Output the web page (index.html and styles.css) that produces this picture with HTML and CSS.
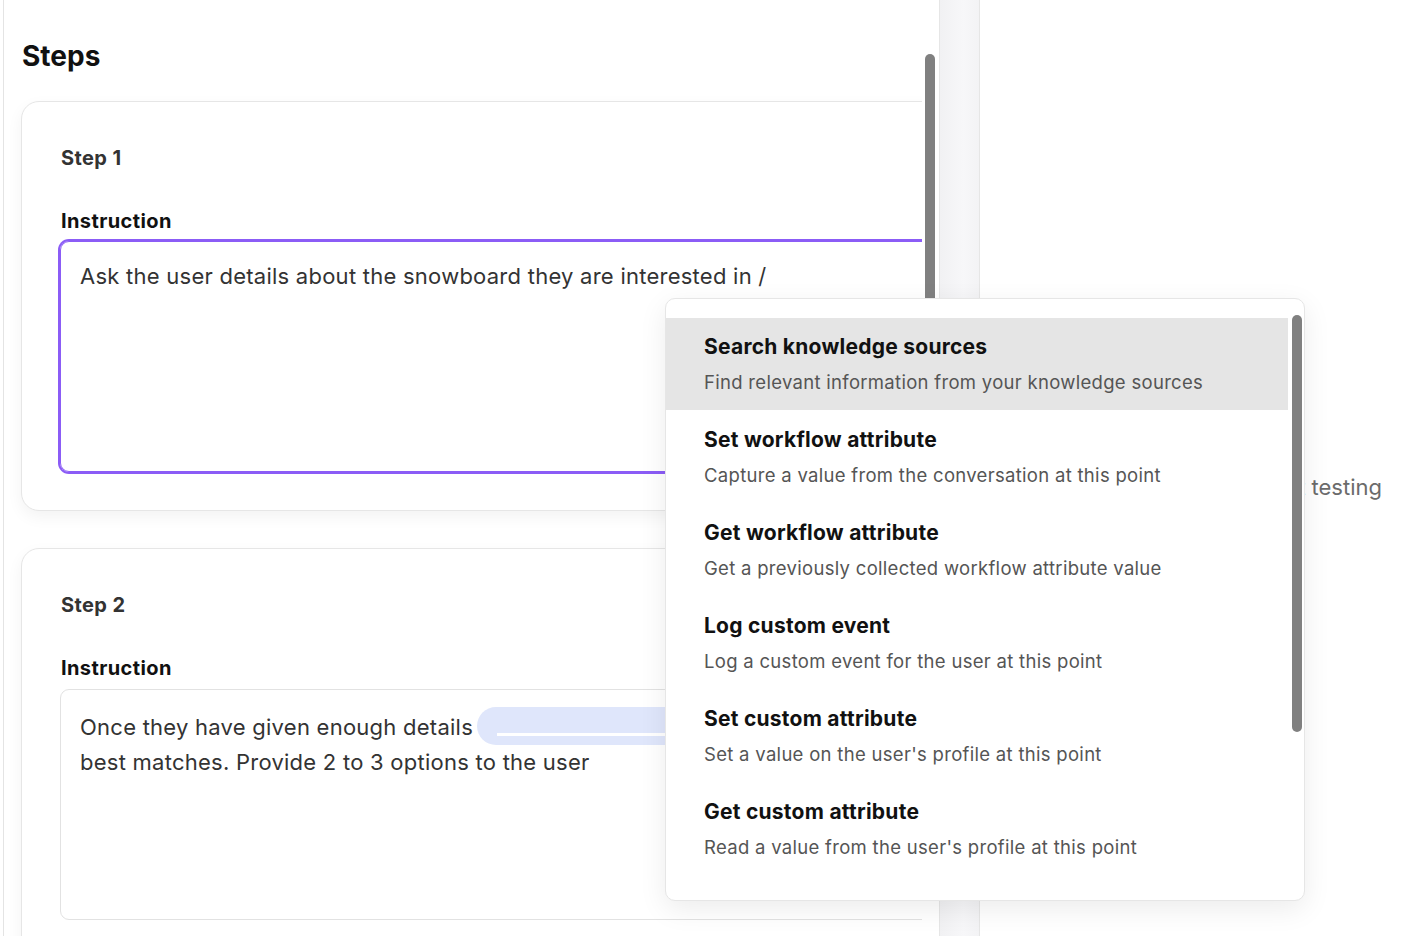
FILE: index.html
```html
<!DOCTYPE html>
<html lang="en">
<head>
    <meta charset="UTF-8">
    <meta name="viewport" content="width=device-width, initial-scale=1.0">
    <title>Workflow steps</title>
    <link rel="stylesheet" href="styles.css">
</head>
<body>
    <div class="editor">
        <div class="editor-scroll">
            <h1 class="title">Steps</h1>

            <div class="step-card">
                <div class="step-label">Step 1</div>
                <div class="field-label">Instruction</div>
                <div class="instruction active">Ask the user details about the snowboard they are interested in /</div>
            </div>

            <div class="step-card">
                <div class="step-label">Step 2</div>
                <div class="field-label">Instruction</div>
                <div class="instruction">Once they have given enough details <span class="chip"><span class="chip-line"></span></span><br>best matches. Provide 2 to 3 options to the user</div>
            </div>
        </div>
        <div class="scrollbar">
            <div class="thumb editor-thumb"></div>
        </div>
    </div>

    <div class="divider"></div>

    <div class="preview">
        <p class="preview-text">Save your workflow to start testing</p>
    </div>

    <div class="menu">
        <ul class="menu-list">
            <li class="menu-item selected">
                <div class="menu-title">Search knowledge sources</div>
                <div class="menu-desc">Find relevant information from your knowledge sources</div>
            </li>
            <li class="menu-item">
                <div class="menu-title">Set workflow attribute</div>
                <div class="menu-desc">Capture a value from the conversation at this point</div>
            </li>
            <li class="menu-item">
                <div class="menu-title">Get workflow attribute</div>
                <div class="menu-desc">Get a previously collected workflow attribute value</div>
            </li>
            <li class="menu-item">
                <div class="menu-title">Log custom event</div>
                <div class="menu-desc">Log a custom event for the user at this point</div>
            </li>
            <li class="menu-item">
                <div class="menu-title">Set custom attribute</div>
                <div class="menu-desc">Set a value on the user's profile at this point</div>
            </li>
            <li class="menu-item">
                <div class="menu-title">Get custom attribute</div>
                <div class="menu-desc">Read a value from the user's profile at this point</div>
            </li>
        </ul>
        <div class="scrollbar menu-scrollbar">
            <div class="thumb menu-thumb"></div>
        </div>
    </div>
</body>
</html>
```

FILE: styles.css
```css
body {
    font-family: Inter, "Noto Sans", sans-serif;
    margin: 0;
    padding: 0;
    background-color: #fff;
    display: flex;
    flex-direction: row;
    height: 936px;
    overflow: hidden;
    color: #1a1a1a;
}
.editor {
    margin-left: 3px;
    border-left: 1px solid #e4e4e4;
    width: 935px;
    display: flex;
    flex-direction: row;
}
.editor-scroll {
    width: 901px;
    padding-left: 17px;
    overflow: hidden;
}
.title {
    font-size: 28px;
    font-weight: 700;
    margin: 39px 0 28px 1px;
    line-height: 34px;
    color: #111;
}
.step-card {
    width: 1000px;
    border: 1px solid #e6e6e6;
    border-radius: 18px;
    padding: 42px 0 38px 38px;
    margin-bottom: 37px;
    box-shadow: 0 6px 16px rgba(0,0,0,0.05);
    background: #fff;
}
.step-label {
    font-size: 20px;
    font-weight: 700;
    letter-spacing: 0.4px;
    color: #333;
    line-height: 28px;
    padding-left: 1px;
}
.field-label {
    font-size: 20px;
    font-weight: 700;
    letter-spacing: 0.4px;
    color: #111;
    line-height: 28px;
    margin-top: 35px;
    margin-bottom: 7px;
    padding-left: 1px;
}
.instruction {
    border: 1px solid #e2e2e2;
    border-radius: 9px;
    height: 231px;
    box-sizing: border-box;
    padding: 20px 19px;
    font-size: 22px;
    letter-spacing: 0.25px;
    line-height: 35px;
    color: #333;
}
.instruction.active {
    border-color: #8b5cf6;
    box-shadow: 0 0 0 2px #8b5cf6;
    margin-top: -1px;
    padding-top: 17px;
}
.chip {
    display: inline-block;
    vertical-align: middle;
    width: 300px;
    height: 38px;
    margin-top: -6px;
    margin-left: -2px;
    border-radius: 19px;
    background-color: #dfe6fb;
    box-sizing: border-box;
    padding: 0 0 0 20px;
}
.chip-line {
    display: block;
    height: 26px;
    border-bottom: 3px solid #fff;
}
.scrollbar {
    width: 10px;
    margin-left: 3px;
    padding-top: 54px;
}
.thumb {
    background-color: #808080;
    border-radius: 5px;
}
.editor-thumb {
    height: 700px;
}
.divider {
    width: 39px;
    background: linear-gradient(to right, #f1f1f3, #f7f7f9 60%, #f3f3f5);
    border-left: 1px solid #e6e6e6;
    border-right: 1px solid #e6e6e6;
}
.preview {
    flex: 1;
    display: flex;
    justify-content: flex-end;
    padding: 470px 42px 0 0;
}
.preview-text {
    margin: 0;
    font-size: 22px;
    line-height: 34px;
    color: #6b6b6b;
    white-space: nowrap;
}
.menu {
    position: absolute;
    left: 665px;
    top: 298px;
    width: 640px;
    height: 603px;
    box-sizing: border-box;
    border: 1px solid #e6e6e6;
    border-radius: 10px;
    background: #fff;
    box-shadow: 0 8px 28px rgba(0,0,0,0.08);
    display: flex;
    flex-direction: row;
    overflow: hidden;
}
.menu-list {
    list-style-type: none;
    margin: 0;
    padding: 19px 0 0 0;
    flex: 1;
}
.menu-item {
    height: 93px;
    box-sizing: border-box;
    padding: 15px 0 0 38px;
}
.menu-item.selected {
    background-color: #e5e5e5;
    height: 92px;
    margin-bottom: 1px;
}
.menu-title {
    font-size: 21px;
    font-weight: 700;
    letter-spacing: 0.25px;
    color: #111;
    line-height: 28px;
}
.menu-desc {
    font-size: 18.5px;
    letter-spacing: 0.3px;
    color: #555;
    line-height: 26px;
    margin-top: 8px;
}
.menu-scrollbar {
    margin: 0 2px 0 4px;
    padding-top: 16px;
}
.menu-thumb {
    height: 417px;
}
```
